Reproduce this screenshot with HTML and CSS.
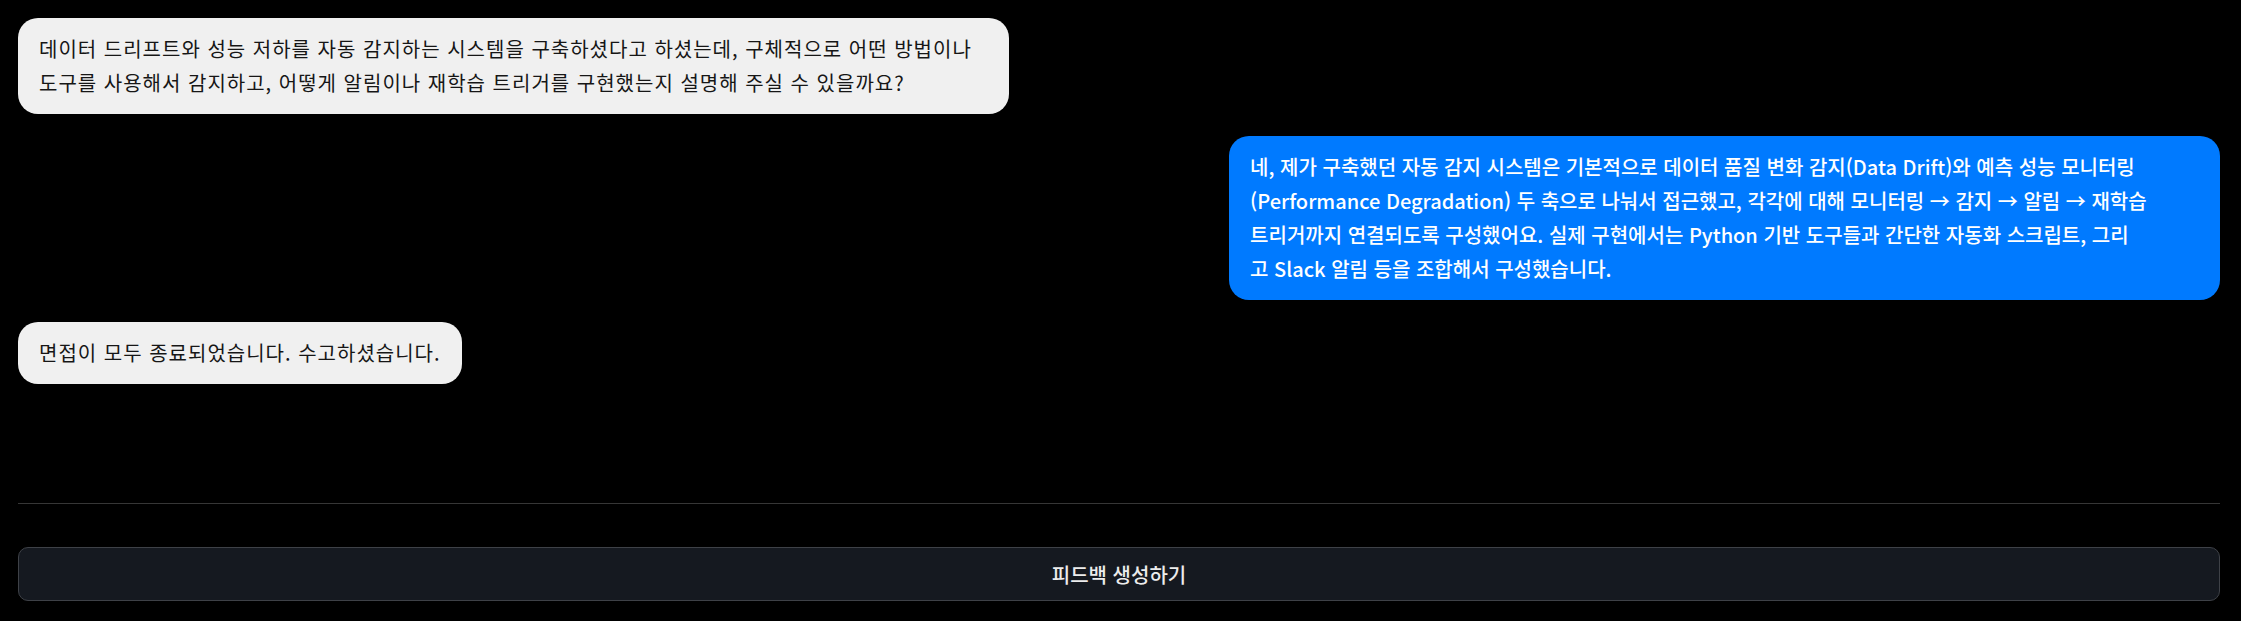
FILE: index.html
```html
<!DOCTYPE html>
<html lang="ko">
<head>
<meta charset="utf-8">
<title>면접</title>
<link rel="stylesheet" href="styles.css">
</head>
<body>
<div class="app">
  <div class="messages">
    <div class="msg msg-bot">데이터 드리프트와 성능 저하를 자동 감지하는 시스템을 구축하셨다고 하셨는데, 구체적으로 어떤 방법이나 도구를 사용해서 감지하고, 어떻게 알림이나 재학습 트리거를 구현했는지 설명해 주실 수 있을까요?</div>
    <div class="msg msg-user">네, 제가 구축했던 자동 감지 시스템은 기본적으로 데이터 품질 변화 감지(Data Drift)와 예측 성능 모니터링 (Performance Degradation) 두 축으로 나눠서 접근했고, 각각에 대해 모니터링 → 감지 → 알림 → 재학습<br>트리거까지 연결되도록 구성했어요. 실제 구현에서는 Python 기반 도구들과 간단한 자동화 스크립트, 그리<br>고 Slack 알림 등을 조합해서 구성했습니다.</div>
    <div class="msg msg-bot">면접이 모두 종료되었습니다. 수고하셨습니다.</div>
  </div>
  <div class="footer">
    <button class="feedback-btn" type="button">피드백 생성하기</button>
  </div>
</div>
</body>
</html>
```

FILE: styles.css
```css
* { box-sizing: border-box; }
html, body {
  margin: 0;
  padding: 0;
  background: #000;
  height: 100%;
}
body {
  font-family: "Noto Sans CJK KR", "Noto Sans", sans-serif;
  font-size: 20px;
  line-height: 34px;
}
.app {
  height: 100vh;
  display: flex;
  flex-direction: column;
  padding: 18px 21px 20px 18px;
}
.messages {
  flex: 1;
  display: flex;
  flex-direction: column;
  gap: 22px;
  align-items: flex-start;
}
.msg {
  max-width: 45%;
  padding: 14px 21px;
  border-radius: 20px;
}
.msg-bot {
  background: #f0f0f0;
  color: #161616;
  font-weight: 400;
  letter-spacing: 1px;
}
.msg-user {
  align-self: flex-end;
  width: 45%;
  background: #007aff;
  color: #ffffff;
  font-weight: 500;
  word-break: keep-all;
}
.footer {
  border-top: 1px solid #363636;
  padding-top: 43px;
}
.feedback-btn {
  display: block;
  width: 100%;
  height: 54px;
  background: #151920;
  border: 1px solid #3e4147;
  border-radius: 10px;
  color: #ececec;
  font-family: "Noto Sans CJK KR", "Noto Sans", sans-serif;
  font-size: 20px;
  font-weight: 500;
  cursor: pointer;
}
```
